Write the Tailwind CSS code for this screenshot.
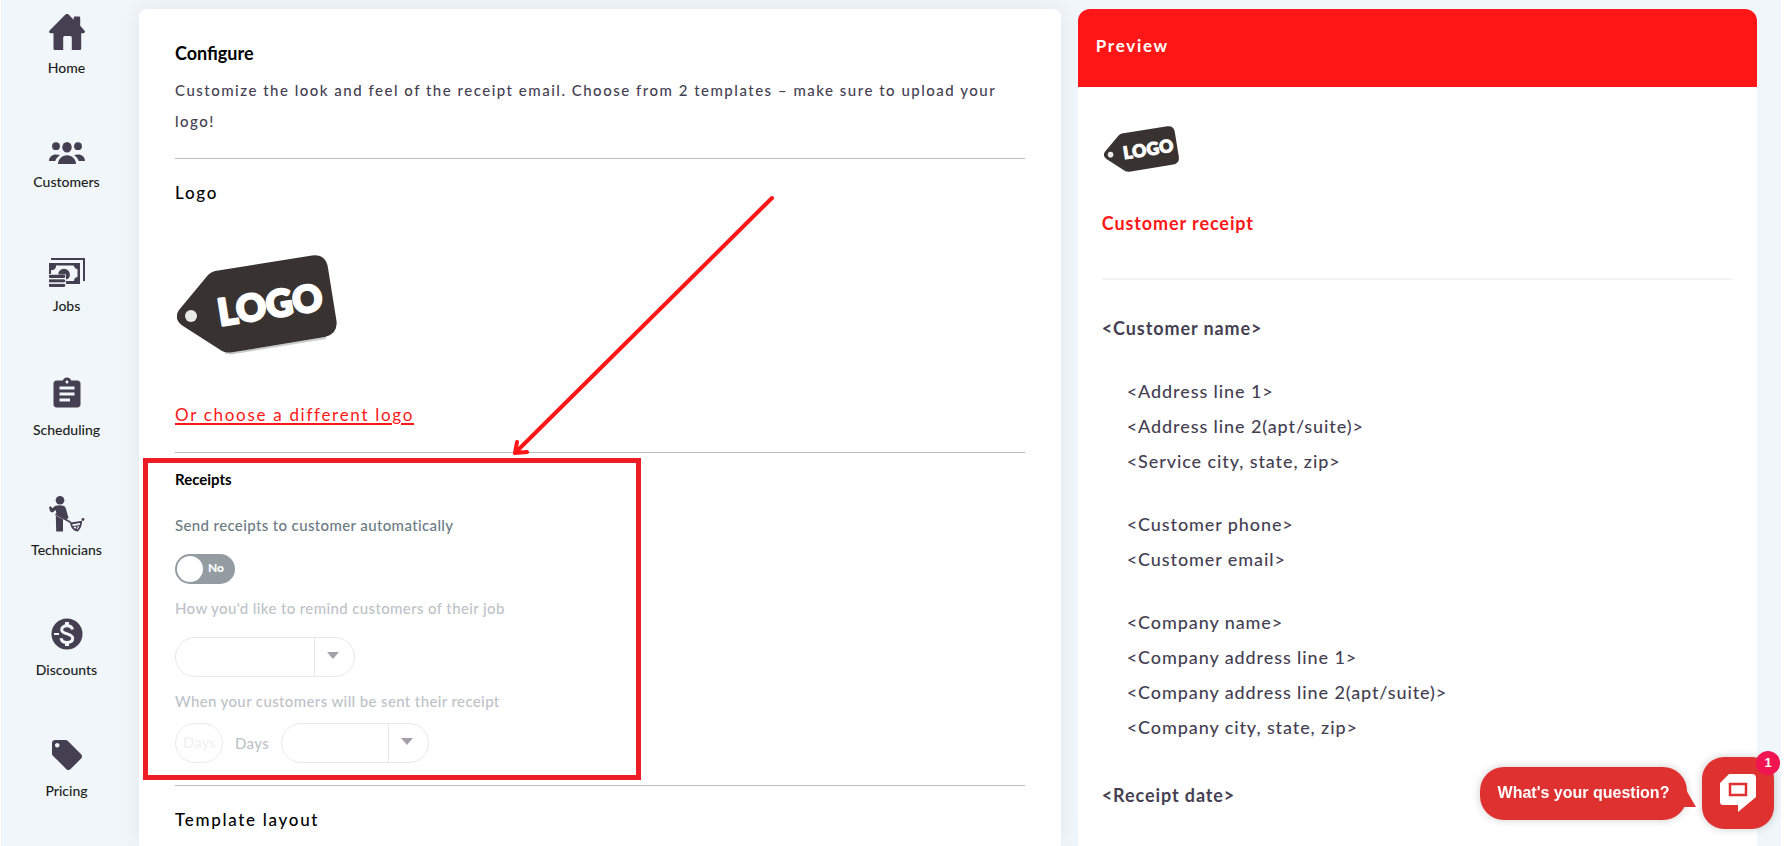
<!DOCTYPE html>
<html lang="en">
<head>
    <meta charset="UTF-8">
    <meta name="viewport" content="width=device-width, initial-scale=1.0">
    <title>Receipt email settings</title>
    <script src="https://cdn.jsdelivr.net/npm/@tailwindcss/browser@4"></script>
</head>
<body class="bg-[#f0f6f9] min-h-screen flex border-l border-r-6 border-white overflow-hidden font-['Lato',sans-serif] text-[#453f52]">

<!-- Sidebar -->
<nav class="w-[138px] shrink-0 pl-[6px] pt-[14px] pr-[13px] flex flex-col text-[14px] leading-5 font-medium text-[#1c1b20]">
    <a href="#" class="flex flex-col items-center gap-2 mb-16">
        <svg class="w-9 h-9 fill-[#453f52]" viewBox="0 0 36 36">
            <path d="M16.2.8a2.400 2.400 0 0 1 3.600 0L24.700 5.700V3.600a1 1 0 0 1 1-1h4.500a1 1 0 0 1 1 1v8.200l4.200 4.600c1 1.300.6 2.900-1.200 2.900h-2v15.200a1.500 1.500 0 0 1-1.500 1.500h-7.900V23.500a1.500 1.500 0 0 0-1.500-1.500h-5.600a1.500 1.500 0 0 0-1.500 1.500V36H6a1.500 1.500 0 0 1-1.500-1.500V19.300H1.800c-1.800 0-2.300-1.600-1.200-2.900z"/>
        </svg>
        Home
    </a>
    <a href="#" class="flex flex-col items-center gap-2 mb-[66px]">
        <svg class="w-9 h-[22px] fill-[#453f52]" viewBox="0 0 36 22">
            <circle cx="7" cy="4.200" r="3.900"/><circle cx="29" cy="4.200" r="3.900"/>
            <ellipse cx="18" cy="5.300" rx="4.700" ry="5.200"/>
            <path d="M9 22c0-4.500 3.800-8.700 9-8.700s9 4.200 9 8.700z"/>
            <path d="M0 19c0-4 3.200-6.500 7-6.500 1.500 0 2.800.2 4 .8-2.500 1.400-3.900 3.300-4.700 5.700zM36 19c0-4-3.200-6.500-7-6.500-1.500 0-2.800.2-4 .8 2.500 1.400 3.900 3.300 4.700 5.700z"/>
        </svg>
        Customers
    </a>
    <a href="#" class="flex flex-col items-center gap-2 mb-[60px]">
        <svg class="w-9 h-[30px]" viewBox="0 0 36 30">
            <path d="M2 1H35V23" fill="none" stroke="#453f52" stroke-width="2"/>
            <path fill="#453f52" fill-rule="evenodd" d="M0 5H31V26H17V23H25A4 4 0 0 1 28.500 19V11A4 4 0 0 1 25 7.500H7A4 4 0 0 1 2 12V16H0z"/>
            <path fill="#453f52" d="M0 5H7Q7 11 0 12zM24 5H31V12Q25 11 24 5zM24 26Q25 20 31 19V26z"/>
            <path fill="#453f52" d="M9.500 14.500a5.700 5.700 0 1 1 11 4.500q-1 2-3.500 2.500v-5H9.500z"/>
            <path d="M1.200 18.400H14.800M1.200 22.800H14.800M1.200 27.300H14.800" stroke="#453f52" stroke-width="3.200" stroke-linecap="round"/>
            <path d="M1 20.600H16M1 25.100H16" stroke="#f0f6f9" stroke-width="1"/>
        </svg>
        Jobs
    </a>
    <a href="#" class="flex flex-col items-center gap-2 mb-14">
        <svg class="w-9 h-9 fill-[#453f52]" viewBox="0 0 24 24">
            <path d="M19 3h-4.180C14.400 1.840 13.300 1 12 1s-2.400.84-2.820 2H5c-1.100 0-2 .9-2 2v14c0 1.100.9 2 2 2h14c1.100 0 2-.9 2-2V5c0-1.100-.9-2-2-2zm-7 0c.55 0 1 .45 1 1s-.45 1-1 1-1-.45-1-1 .45-1 1-1zm2 14H7v-2h7v2zm3-4H7v-2h10v2zm0-4H7V7h10v2z"/>
        </svg>
        Scheduling
    </a>
    <a href="#" class="flex flex-col items-center gap-2 mb-14">
        <svg class="w-9 h-9 fill-[#453f52]" viewBox="0 0 36 36">
            <circle cx="11" cy="4.300" r="4.300"/>
            <path d="M0 11.500 1.500 10 3.200 12.200 6.500 9.700Q11 8.500 15 10q1.500.8 2 3l2.500 9-2 1.200L7.500 18.500 6.800 14 3.500 16.500 1.200 15.500z"/>
            <path d="M6.800 19.500 14 23.200V35.500H7.200z"/>
            <path d="M6.500 18 22 26.500" fill="none" stroke="#453f52" stroke-width="1.600"/>
            <path d="M22 27.500 32.200 25.800Q32 31 28.500 34.500 23.500 34 22 27.500z" fill="none" stroke="#453f52" stroke-width="1.800"/>
            <path d="M24 30.500 31 29.500M26.500 34 28.500 30" fill="none" stroke="#453f52" stroke-width="1.200"/>
            <circle cx="34" cy="23.500" r="1.400"/>
        </svg>
        Technicians
    </a>
    <a href="#" class="flex flex-col items-center gap-2 mb-[57px]">
        <svg class="w-9 h-9" viewBox="0 0 36 36">
            <circle cx="18" cy="18" r="15.500" fill="#453f52"/>
            <path d="M23.500 13.500C23 11 21 9.700 18 9.700S12.700 11 12.700 13.700C12.700 19 23.700 16.700 23.700 22.300 23.700 25 21.500 26.500 18 26.500S12.500 25 12 22.200" fill="none" stroke="#f0f6f9" stroke-width="3"/>
            <path d="M18 6V10M18 26V30" stroke="#f0f6f9" stroke-width="4"/>
            <path d="M5 18H10" stroke="#f0f6f9" stroke-width="2"/>
        </svg>
        Discounts
    </a>
    <a href="#" class="flex flex-col items-center gap-2">
        <svg class="w-9 h-9 fill-[#453f52]" viewBox="0 0 24 24">
            <path d="M21.410 11.580l-9-9C12.050 2.220 11.550 2 11 2H4c-1.100 0-2 .9-2 2v7c0 .55.220 1.050.590 1.420l9 9c.360.360.860.580 1.410.580s1.050-.22 1.410-.59l7-7c.37-.36.590-.86.590-1.410s-.23-1.060-.59-1.420zM5.500 7C4.670 7 4 6.330 4 5.500S4.670 4 5.500 4 7 4.670 7 5.500 6.330 7 5.500 7z"/>
        </svg>
        Pricing
    </a>
</nav>

<div class="flex-1 grid grid-cols-[19fr_14fr] gap-[17px] pt-[9px] pr-6">

    <!-- Settings card -->
    <main class="relative bg-white rounded-t-lg shadow-[0_0_24px_rgba(60,80,100,0.08)] px-9 pt-[30px]">
        <h1 class="text-[18px] leading-7 font-bold text-black">Configure</h1>
        <p class="mt-[8px] text-[15px] leading-[31px] tracking-widest font-medium">Customize the look and feel of the receipt email. Choose from 2 templates – make sure to upload your logo!</p>
        <hr class="mt-[21px] border-[#bdbdbd]">

        <h2 class="mt-5 text-[17px] leading-7 tracking-widest font-medium text-black">Logo</h2>
        <svg class="mt-[48px] ml-[2px] w-[162px] h-[100px]" viewBox="0 0 162 100">
            <defs>
                <g id="tag">
                    <path d="M2 55 31 20Q34 17 38 16L135 .5Q149-1 151 13L159.500 66Q161 79 148 82L54 97.500Q49 98 45 96L6 71Q-4 64 2 55z" fill="#383330"/>
                    <circle cx="14" cy="61" r="6" fill="#e9e9e9"/>
                    <text x="43" y="71" transform="rotate(-9 43 71)" font-family="Lato" font-weight="900" font-size="37" fill="#fff" stroke="#fff" stroke-width="2.500" stroke-linejoin="round">LOGO</text>
                </g>
            </defs>
            <path d="M48 97.500 54 98.500 149 83" fill="none" stroke="#000" stroke-opacity=".2" stroke-width="2"/>
            <use href="#tag"/>
        </svg>
        <a href="#" class="inline-block mt-[46px] text-[17px] leading-7 tracking-widest text-[#ff1717] underline decoration-2 underline-offset-2">Or choose a different logo</a>
        <hr class="mt-[23px] border-[#bdbdbd]">

        <section class="relative pt-3 text-[15px] leading-6 font-medium">
            <h2 class="leading-7 font-bold text-black">Receipts</h2>
            <label for="auto-send" class="block mt-5 tracking-wide text-[#6b7a83]">Send receipts to customer automatically</label>
            <div class="relative mt-[17px] w-[60px] h-[30px]">
                <input id="auto-send" type="checkbox" role="switch" class="appearance-none block w-full h-full rounded-full bg-[#939ca1]">
                <span class="absolute left-[2px] top-[2px] size-[26px] rounded-full bg-white pointer-events-none"></span>
                <span class="absolute right-[11px] top-[4px] text-[12px] leading-5 font-black text-white pointer-events-none">No</span>
            </div>
            <label for="remind-by" class="block mt-3 tracking-wide text-[#bcc3c7]">How you'd like to remind customers of their job</label>
            <div class="relative mt-[17px] w-[180px] h-10">
                <select id="remind-by" disabled class="appearance-none w-full h-full rounded-full border border-[#e8e8e8] bg-white"></select>
                <span class="absolute right-0 inset-y-px w-[41px] border-l border-[#e8e8e8] flex items-center justify-center pointer-events-none">
                    <svg class="w-3 h-[7px] mr-1 mb-[3px] fill-[#a3a0aa]" viewBox="0 0 12 7"><path d="M0 0H12L6 7z"/></svg>
                </span>
            </div>
            <label for="send-days" class="block mt-3 tracking-wide text-[#bcc3c7]">When your customers will be sent their receipt</label>
            <div class="mt-[10px] flex items-center gap-3 text-[#bcc3c7]">
                <input id="send-days" type="text" placeholder="Days" disabled class="w-12 h-10 rounded-full border border-[#eaeaea] px-[7px] pb-[2px] placeholder:text-[#f1f1f1]">
                <label for="send-when" class="w-[34px] tracking-wide">Days</label>
                <div class="relative w-[148px] h-10">
                    <select id="send-when" disabled class="appearance-none w-full h-full rounded-full border border-[#e8e8e8] bg-white"></select>
                    <span class="absolute right-0 inset-y-px w-[41px] border-l border-[#e8e8e8] flex items-center justify-center pointer-events-none">
                        <svg class="w-3 h-[7px] mr-1 mb-[3px] fill-[#a3a0aa]" viewBox="0 0 12 7"><path d="M0 0H12L6 7z"/></svg>
                    </span>
                </div>
            </div>
            <!-- Highlight frame -->
            <div class="absolute -left-8 top-[5px] -bottom-[17px] w-[498px] border-[5px] border-[#ee1c24] pointer-events-none"></div>
        </section>
        <hr class="mt-[22px] border-[#bdbdbd]">
        <h2 class="mt-5 text-[17px] leading-7 tracking-widest font-medium text-black">Template layout</h2>

        <!-- Arrow to the highlighted section -->
        <svg class="absolute left-[370px] top-[184px] w-[268px] h-[266px] pointer-events-none" viewBox="0 0 268 266" fill="none" stroke="#ff1717" stroke-width="4" stroke-linecap="round" stroke-linejoin="round">
            <path d="M263 5 6 260M8 249 6 260 18 259"/>
        </svg>
    </main>

    <!-- Preview card -->
    <aside class="bg-white rounded-t-xl overflow-hidden">
        <h2 class="bg-[#ff1717] text-white h-[78px] px-[18px] pt-[23px] text-[17px] leading-7 font-bold tracking-widest">Preview</h2>
        <div class="px-6 pt-[39px] text-[18px] leading-[35px] tracking-wider font-medium">
            <svg class="ml-[2px] w-[76px] h-[47px]" viewBox="0 0 162 100"><use href="#tag"/></svg>
            <h3 class="mt-[33px] font-bold text-[#ff1717]">Customer receipt</h3>
            <hr class="mt-[37px] border-t-2 border-[#f3f3f3]">
            <p class="mt-[31px] font-bold">&lt;Customer name&gt;</p>
            <div class="mt-7 pl-[25px] flex flex-col gap-7">
                <p>&lt;Address line 1&gt;<br>&lt;Address line 2(apt/suite)&gt;<br>&lt;Service city, state, zip&gt;</p>
                <p>&lt;Customer phone&gt;<br>&lt;Customer email&gt;</p>
                <p>&lt;Company name&gt;<br>&lt;Company address line 1&gt;<br>&lt;Company address line 2(apt/suite)&gt;<br>&lt;Company city, state, zip&gt;</p>
            </div>
            <p class="mt-[33px] font-bold">&lt;Receipt date&gt;</p>
        </div>
    </aside>
</div>

<!-- Chat widget -->
<div class="fixed right-[13px] bottom-[17px] flex items-center gap-[15px] font-['Liberation_Sans',sans-serif]">
    <button class="relative h-[53px] w-[207px] rounded-[24px] bg-[#e03131] text-white text-[16px] font-bold whitespace-nowrap shadow-[0_0_8px_rgba(0,0,0,0.2)]">
        What's your question?
        <svg class="absolute -right-[9px] top-[21px] w-[13px] h-[19px] fill-[#e03131]" viewBox="0 0 13 19"><path d="M2 0 13 19H0z"/></svg>
    </button>
    <button aria-label="Open chat" class="relative size-[72px] rounded-[22px] bg-[#e03131] shadow-[0_0_8px_rgba(0,0,0,0.2)] flex items-center justify-center">
        <svg class="w-9 h-[38px]" viewBox="0 0 36 38">
            <path d="M9 0H32Q36 0 36 4V23L18 38V31H3Q0 31 0 28V9z" fill="#fff"/>
            <path d="M10 10H26V21H10z" fill="none" stroke="#e03131" stroke-width="2.500"/>
        </svg>
        <span class="absolute -right-[6px] -top-[6px] size-6 rounded-full bg-[#f01450] text-white text-[13px] leading-6 font-bold text-center">1</span>
    </button>
</div>

</body>
</html>
